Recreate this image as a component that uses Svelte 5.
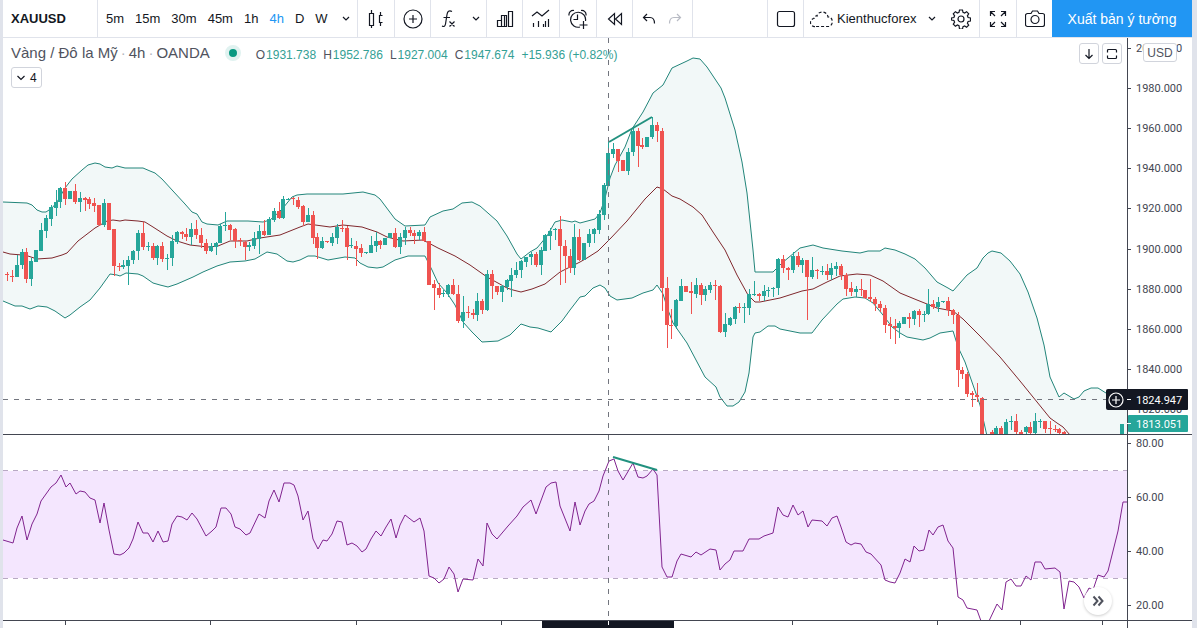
<script>
  const intervals = ['5m', '15m', '30m', '45m', '1h', '4h', 'D', 'W'];
  let active = '4h';

  const ohlc = [
    ['O', '1931.738'],
    ['H', '1952.786'],
    ['L', '1927.004'],
    ['C', '1947.674']
  ];

  // one candle per bar: direction, high, body top, body bottom, low
  const rawCandles = `
    r272,274,275,281 r270,276,277,282 g255,265,277,277 g249,252,265,269 r248,252,279,283 g258,261,279,286
    g250,250,262,262 g223,230,251,251 g215,218,231,238 g205,207,219,226 g190,202,208,216 g187,188,202,208
    r182,188,199,205 g191,191,199,199 r184,191,202,204 g192,198,202,212 r197,198,200,211 r197,199,204,209
    r198,203,206,212 r205,205,225,226 g199,203,225,227 r203,203,230,230 r229,229,266,276 r263,266,267,271
    g260,265,267,269 g256,260,266,285 g250,251,260,264 g230,233,251,260 r222,233,247,250 g242,246,247,251
    r243,246,258,260 g245,246,258,265 r242,246,259,262 g254,258,259,270 g235,241,258,266 g231,232,242,244
    r231,232,234,239 r228,234,237,241 g223,229,237,245 r220,229,235,239 r228,235,243,248 r239,243,251,254
    g243,246,251,252 g242,243,247,255 g224,226,243,243 g212,225,226,231 r224,225,230,240 r228,229,241,248
    r238,240,241,246 r241,242,247,260 g242,245,247,251 g232,238,246,249 g225,231,239,254 r220,231,235,236
    g217,219,235,235 g208,211,220,222 r202,211,218,219 g196,199,218,219 g198,199,200,200 r197,198,199,205
    r197,200,207,209 r205,206,222,226 g208,215,222,222 r211,215,238,244 r233,237,248,259 g237,241,248,249
    r241,241,242,243 g233,237,243,246 g224,227,238,244 r220,228,229,232 r226,228,247,260 g238,245,246,248
    r241,246,249,266 r244,248,253,257 g252,252,253,254 g236,245,253,253 g232,241,246,252 r240,241,245,249
    g238,238,245,245 g233,233,238,238 r228,233,247,248 g233,237,247,254 g227,230,238,245 r227,230,233,236
    r230,233,236,244 g230,232,236,240 r227,232,241,242 r241,241,285,285 r280,284,288,310 r283,288,295,298
    g290,293,294,297 g284,285,294,297 r279,285,294,295 r285,294,321,323 g296,312,321,328 r306,312,313,318
    r309,313,315,319 g293,301,315,321 r299,301,310,314 g270,274,310,311 r270,274,286,299 r286,286,292,295
    g285,286,292,302 g279,280,287,290 g268,275,281,297 g262,270,275,278 g260,261,270,278 g257,257,262,267
    g252,254,257,265 r252,254,265,267 g247,250,265,275 g234,235,251,251 g228,231,236,250 g228,229,230,240
    r216,229,246,285 r240,246,256,283 r249,256,268,273 g224,237,268,275 r229,237,260,261 g243,243,260,260
    g229,234,243,247 g228,229,234,243 g210,214,230,234 g183,185,215,220 g142,153,186,186 g143,149,154,158
    r149,149,161,172 r160,160,171,171 g148,152,171,175 g128,131,152,156 r128,131,146,167 r138,145,147,149
    g137,137,147,147 g117,125,137,139 r122,125,131,142 r128,131,288,311 r277,288,325,348 r309,325,326,339
    g299,300,326,329 g279,286,301,301 r286,286,292,292 r282,291,293,314 g278,285,294,298 r283,285,295,305
    g286,289,295,301 g282,285,290,293 r280,285,286,300 r285,286,332,333 g313,324,332,337 g317,318,325,326
    g306,307,319,324 r303,307,308,313 g303,307,308,323 g289,294,308,315 g281,294,295,296 r293,294,296,301
    g285,291,296,301 g287,290,291,297 g287,288,289,297 g258,259,288,295 r255,259,268,273 r267,268,270,280
    g252,256,270,273 r252,256,265,267 g258,260,265,273 r260,260,277,320 g257,270,277,279 r269,270,271,279
    g266,271,272,275 r264,271,275,280 g263,268,275,280 g262,266,269,276 r264,266,275,280 r273,275,289,296
    r282,288,292,296 g286,289,292,297 r279,289,290,296 r290,290,298,299 r279,297,299,302 r297,299,304,311
    r301,304,308,312 r305,308,325,333 r317,324,326,339 r319,326,328,344 g321,323,328,338 g317,317,324,324
    r313,317,319,328 g310,311,319,325 r309,311,315,327 g311,314,315,322 g289,304,314,315 r300,304,307,309
    g297,302,307,312 g301,301,302,303 r297,301,310,316 r309,310,315,324 r312,315,370,387 r367,370,374,379
    r372,374,394,397 r391,393,395,407 r383,395,397,402 r397,398,440,440 r436,436,440,440 r430,432,436,436
    g426,428,436,436 r426,428,436,436 g419,422,436,436 g416,421,422,430 r414,421,432,434 r430,432,436,436
    g426,427,432,434 r422,427,433,434 g413,421,433,434 g419,421,422,428 r421,421,429,433 r421,428,429,434
    r425,429,430,432 r428,429,433,434 r431,432,436,436`;

  const firstX = 7;
  const step = 4.85;

  function parseCandle(item, i) {
    const [high, top, bottom, low] = item.slice(1).split(',').map(Number);
    return { x: Math.round(firstX + i * step), up: item[0] === 'g', high, top, bottom, low };
  }

  const candles = rawCandles.trim().split(/\s+/).map(parseCandle);
  candles.push({ x: 1122, up: true, high: 424, top: 424, bottom: 436, low: 436 });

  const upper = '3,202 27,203 32,205 37,210 42,212 46,212 52,208 57,202 65,188 72,179 82,170 88,165 95,163 100,164 105,167 112,168 117,166 125,168 143,168 150,171 155,173 162,179 173,191 185,204 192,212 197,214 202,222 207,224 218,225 227,221 233,221 248,221 263,222 270,220 278,213 283,208 292,197 297,195 307,194 343,194 363,192 375,195 380,199 395,219 405,226 425,225 430,217 443,211 453,209 462,203 472,202 480,206 497,221 507,236 517,254 521,259 530,252 537,248 547,236 555,222 562,220 572,222 575,221 580,223 595,219 600,213 605,198 610,178 615,165 625,147 632,129 643,112 653,93 663,85 672,68 687,61 693,58 700,59 707,67 717,82 721,88 725,98 735,130 742,162 747,193 753,250 755,272 773,272 782,263 788,258 800,248 813,245 823,248 842,251 860,253 868,251 880,251 885,248 895,250 905,254 915,259 925,268 937,282 948,288 953,291 967,275 977,268 983,258 988,253 992,251 1001,253 1010,261 1020,274 1028,292 1037,318 1044,345 1050,377 1059,397 1064,393 1074,399 1079,397 1084,391 1091,388 1098,388 1106,393 1127,402';
  const lower = '3,301 15,306 22,306 30,309 38,306 47,307 55,311 65,318 70,315 80,307 90,300 100,288 110,274 117,275 120,276 126,273 138,274 143,276 153,283 160,285 168,287 177,284 193,277 203,272 217,266 230,262 245,261 255,259 267,252 277,254 287,261 293,262 300,260 308,256 315,256 328,260 345,257 355,258 360,263 368,267 377,268 383,267 395,260 408,256 425,256 432,270 438,283 447,293 455,305 463,322 472,332 482,342 498,341 510,335 521,324 530,327 538,328 551,332 562,321 570,310 580,297 585,296 593,288 600,285 605,288 610,296 617,300 632,298 643,293 653,290 657,285 663,294 668,310 673,323 687,343 705,377 716,387 720,397 727,406 733,406 739,402 745,392 749,373 753,337 755,333 760,332 768,326 775,326 780,329 800,333 812,333 822,320 837,304 843,299 855,297 865,298 873,303 883,315 892,327 900,333 907,337 923,340 930,338 940,333 953,331 958,347 965,362 973,385 980,405 987,436 1127,440';
  const middle = '3,252 10,254 22,255 28,256 37,259 52,258 62,255 67,253 78,241 95,228 107,221 113,220 120,221 125,220 138,221 145,222 153,227 167,236 177,241 190,245 208,247 218,246 230,241 247,241 260,238 280,235 300,227 308,224 330,227 343,225 362,227 377,232 387,237 403,241 423,240 438,248 455,256 470,265 487,277 507,288 513,290 521,292 532,289 545,284 560,272 580,262 587,258 598,251 610,239 627,221 645,199 657,187 663,189 672,196 680,199 693,207 702,215 713,232 725,250 737,275 748,295 755,302 760,302 780,298 802,291 813,289 827,282 840,276 857,274 870,275 883,281 900,293 917,300 937,308 953,311 963,319 980,336 1000,357 1020,381 1050,418 1057,423 1063,427 1070,435';
  const bandFill = upper + ' ' + lower.split(' ').reverse().join(' ');

  const rsi = '3,540 13,543 17,528 22,516 27,540 32,524 37,514 41,501 51,487 56,483 61,475 66,487 70,483 76,494 80,491 85,492 90,498 95,500 100,523 104,503 109,530 114,554 120,555 124,553 129,548 133,539 138,522 143,533 148,533 153,542 158,531 163,542 168,541 172,524 177,516 182,517 187,520 192,513 197,519 206,536 212,531 216,527 221,508 226,508 231,514 235,527 240,529 246,535 250,533 259,514 265,518 269,501 274,490 279,502 284,483 290,483 294,485 298,496 303,520 308,511 313,539 318,549 323,540 327,541 332,534 337,521 342,522 347,545 352,543 357,546 362,552 366,549 371,539 376,531 381,536 386,527 391,519 396,538 400,525 405,515 414,522 420,518 424,531 429,576 434,578 439,583 444,579 449,567 454,574 458,592 463,579 473,580 478,559 483,566 487,523 492,534 497,539 508,526 517,516 523,507 531,500 536,514 546,487 551,483 556,482 560,506 570,531 575,502 580,525 585,511 589,504 594,501 599,491 603,476 609,461 614,459 618,471 623,480 633,463 638,477 643,478 647,476 653,469 657,475 662,567 667,577 672,577 677,561 681,554 691,557 696,552 701,555 710,549 716,550 720,570 725,564 730,560 734,551 743,551 749,539 759,539 764,536 773,533 778,507 783,515 788,517 793,505 798,515 803,511 808,527 812,520 822,521 827,526 832,518 837,516 841,527 846,542 851,545 855,543 861,544 866,552 871,554 881,565 885,580 890,582 895,583 900,573 905,559 910,562 914,546 919,551 924,550 929,530 933,535 938,527 943,525 948,541 953,548 958,597 963,600 967,608 977,610 981,621 989,621 997,604 1002,610 1006,582 1011,579 1016,586 1021,586 1026,576 1031,580 1035,562 1041,562 1045,569 1055,568 1060,572 1064,609 1069,581 1074,582 1079,587 1084,598 1089,588 1093,590 1098,575 1104,577 1108,571 1118,531 1123,502 1127,502';

  const priceLabels = [2000, 1980, 1960, 1940, 1920, 1900, 1880, 1860, 1840, 1820].map((p, i) => ({
    text: p.toFixed(3),
    y: Math.round(48 + i * 40.1)
  }));
  const rsiLabels = [80, 60, 40, 20].map((v, i) => ({ text: v.toFixed(2), y: 443 + i * 54 }));
  const timeTicks = [65, 210, 356, 501, 792, 937, 1020, 1102];
</script>

<div class="page">
  <div class="edge left"></div>
  <main>
    <header>
      <button class="cell symbol">XAUUSD</button>
      <nav class="cell intervals">
        {#each intervals as name}
          <button class:active={name === active} on:click={() => (active = name)}>{name}</button>
        {/each}
        <button class="more" aria-label="More intervals">
          <svg width="8" height="6" viewBox="0 0 8 6"><path d="M1 1l3 3 3-3" /></svg>
        </button>
      </nav>
      <button class="cell icon" aria-label="Chart type">
        <svg width="20" height="20" viewBox="0 0 20 20"><path d="M3.500 4.500h4v12h-4zM5.500 1v3.500M5.500 16.500V19M16.500 6.500h-3v7h3M14.500 3v3.500M14.500 13.500V17" /></svg>
      </button>
      <button class="cell icon narrow" aria-label="Compare">
        <svg width="20" height="20" viewBox="0 0 20 20"><circle cx="10" cy="10" r="9" /><path d="M10 6v8M6 10h8" /></svg>
      </button>
      <div class="cell pair">
        <button aria-label="Indicators">
          <svg width="16" height="20" viewBox="0 0 16 20"><path d="M11 2.500c-3-1.500-4.500 0-5 3L4.500 15c-.5 2.500-1.500 3-3.500 2M2.500 8.500H9M8.500 12.500l5 5M13.500 12.500l-5 5" /></svg>
        </button>
        <button aria-label="Indicator templates">
          <svg width="8" height="6" viewBox="0 0 8 6"><path d="M1 1l3 3 3-3" /></svg>
        </button>
      </div>
      <button class="cell icon narrow" aria-label="Financials">
        <svg width="18" height="18" viewBox="0 0 18 18"><path d="M1.500 10.500h4v6h-4zM5.500 5.500h5v11h-5zM12.500 1.500h4v15h-4zM8.500 5.500v11" /></svg>
      </button>
      <button class="cell icon" aria-label="Forecast">
        <svg width="20" height="20" viewBox="0 0 20 20"><path d="M1 7l5-4 5 4 7-6M2.500 14v4M7.500 12v6M12.500 15v3M14.500 12v6M17.500 10v8" /></svg>
      </button>
      <button class="cell icon" aria-label="Alert">
        <svg width="20" height="20" viewBox="0 0 20 20"><path d="M12 18a7.500 7.500 0 1 1 5.500-6M9.500 5.500v5h-4M1 6.500c-.5-3 2-5.500 5-5M18 6.500c.5-3-2-5.500-5-5M15.500 12v8M11.500 16h8" /></svg>
      </button>
      <button class="cell icon narrow" aria-label="Replay">
        <svg width="16" height="14" viewBox="0 0 16 14"><path d="M7.500 1.500v11L1.500 7zM14.500 1.500v11L8.500 7z" /></svg>
      </button>
      <div class="cell history">
        <button aria-label="Undo">
          <svg width="14" height="12" viewBox="0 0 14 12"><path d="M5 1L1.500 4.500 5 8M2 4.500h6c3 0 4.500 2 4.500 6" /></svg>
        </button>
        <button class="off" aria-label="Redo">
          <svg width="14" height="12" viewBox="0 0 14 12"><path d="M9 1l3.500 3.500L9 8M12 4.500H6c-3 0-4.500 2-4.500 6" /></svg>
        </button>
      </div>
      <div class="cell spacer"></div>
      <button class="cell icon narrow" aria-label="Layout">
        <svg width="20" height="18" viewBox="0 0 20 18"><rect x="1.500" y="1.500" width="17" height="15" rx="2" /></svg>
      </button>
      <div class="cell account">
        <button class="name">
          <svg width="24" height="18" viewBox="0 0 24 18"><path stroke-dasharray="3 2" d="M5 16.500a4 4 0 0 1-1-8c0-2 2-3 3-2.500C8 .5 17 .5 18 7c5-.5 6 8 1 9.500z" /></svg>
          <span>Kienthucforex</span>
          <svg width="8" height="6" viewBox="0 0 8 6"><path d="M1 1l3 3 3-3" /></svg>
        </button>
        <button aria-label="Settings">
          <svg width="20" height="20" viewBox="0 0 20 20"><circle cx="10" cy="10" r="3" /><path d="M8.500 1h3l.5 2.300 1.600.7 2-1.300 2.100 2.100-1.300 2 .7 1.700 2.400.5v3l-2.400.5-.7 1.600 1.300 2-2.100 2.100-2-1.300-1.600.7-.5 2.400h-3L8 16.600l-1.600-.7-2 1.300-2.100-2.100 1.300-2-.7-1.600L.5 11V9l2.400-.5.7-1.700-1.300-2 2.100-2.100 2 1.300L8 3.300z" /></svg>
        </button>
      </div>
      <button class="cell icon" aria-label="Fullscreen">
        <svg width="18" height="18" viewBox="0 0 18 18"><path d="M1.500 6V1.500H6M12 1.500h4.500V6M16.500 12v4.500H12M6 16.500H1.500V12M1.500 1.500L6 6M16.500 1.500L12 6M16.500 16.500L12 12M1.500 16.500L6 12" /></svg>
      </button>
      <button class="cell icon last" aria-label="Snapshot">
        <svg width="20" height="18" viewBox="0 0 20 18"><path d="M6 3.500l1.500-2.500h5L14 3.500h3.500a2 2 0 0 1 2 2v9a2 2 0 0 1-2 2h-15a2 2 0 0 1-2-2v-9a2 2 0 0 1 2-2z" /><circle cx="10" cy="9.500" r="4" /></svg>
      </button>
      <button class="publish">Xuất bản ý tưởng</button>
    </header>

    <section class="chart">
      <div class="panes">
        <svg class="price" viewBox="3 38 1124 396" preserveAspectRatio="none">
          <polygon class="band" points={bandFill} />
          <polyline class="bound" points={upper} />
          <polyline class="bound" points={lower} />
          <polyline class="basis" points={middle} />
          {#each candles as c}
            <g class={c.up ? 'up' : 'down'}>
              <rect x={c.x} y={c.high} width="1" height={c.low - c.high} />
              <rect x={c.x - 2} y={c.top} width="4" height={c.bottom - c.top} />
            </g>
          {/each}
          <path class="trend" d="M609 142l43-25" />
          <path class="cross" d="M608.500 38v396M3 399.500h1103" />
        </svg>
        <svg class="rsi" viewBox="3 435 1124 185" preserveAspectRatio="none">
          <rect class="zone" x="3" y="471" width="1124" height="107" />
          <path class="level" d="M3 470.500h1124M3 578.500h1124" />
          <polyline class="rsi-line" points={rsi} />
          <path class="trend" d="M613 457l44 13" />
          <path class="cross" d="M608.500 435v185" />
        </svg>
        <svg class="time" viewBox="3 621 1124 7" preserveAspectRatio="none">
          {#each timeTicks as x}
            <rect x={x} y="621" width="1" height="4" />
          {/each}
          <rect class="stamp" x="542" y="621" width="132" height="7" />
          <rect class="stamp-tick" x="608" y="621" width="1" height="4" />
        </svg>

        <div class="legend">
          <div class="line">
            <h1>Vàng / Đô la Mỹ<i>·</i>4h<i>·</i>OANDA</h1>
            <span class="status"></span>
            <div class="values">
              {#each ohlc as [label, value]}
                <span>{label}<b>{value}</b></span>
              {/each}
              <b>+15.936 (+0.82%)</b>
            </div>
          </div>
          <button class="collapse">
            <svg width="10" height="8" viewBox="0 0 10 8"><path d="M1.500 2L5 5.500 8.500 2" /></svg>
            4
          </button>
        </div>

        <div class="pane-buttons">
          <button aria-label="Move pane down">
            <svg width="10" height="12" viewBox="0 0 10 12"><path d="M5 1v9.500M1.500 7L5 10.500 8.500 7" /></svg>
          </button>
          <button aria-label="Maximize pane">
            <svg width="12" height="12" viewBox="0 0 12 12"><path d="M1.500 4.500v-2a1 1 0 0 1 1-1h7a1 1 0 0 1 1 1v2M1.500 7.500v2a1 1 0 0 0 1 1h7a1 1 0 0 0 1-1v-2" /></svg>
          </button>
        </div>

        <button class="add" aria-label="Add at price">
          <svg width="16" height="16" viewBox="0 0 16 16"><circle cx="8" cy="8" r="7" /><path d="M8 4v8M4 8h8" /></svg>
        </button>
        <button class="jump" aria-label="Go to latest bar">
          <svg width="12" height="12" viewBox="0 0 12 12"><path d="M1.500 1.500L5.500 6l-4 4.500M6.500 1.500l4 4.500-4 4.500" /></svg>
        </button>
      </div>

      <div class="axis">
        <svg width="65" height="590" viewBox="1127 38 65 590">
          {#each [...priceLabels, ...rsiLabels] as l}
            <rect x="1128" y={l.y} width="3" height="1" />
            <text x="1136" y={l.y + 4}>{l.text}</text>
          {/each}
          <rect x="1127" y="38" width="1" height="590" />
          <rect x="1127" y="434" width="65" height="1" />
          <rect x="1127" y="620" width="65" height="1" />
          <rect class="tag-dark" x="1127" y="389" width="61" height="21" rx="1" />
          <rect class="tag-green" x="1128" y="415" width="60" height="17" rx="1" />
          <path class="tag-tick" d="M1127 399.500h4M1127 423.500h4" />
          <text class="tag" x="1136" y="404">1824.947</text>
          <text class="tag" x="1136" y="428">1813.051</text>
        </svg>
        <button class="currency">USD</button>
      </div>
    </section>
  </main>
  <div class="edge right"></div>
  <aside></aside>
</div>

<style>
  :global(body) {
    margin: 0;
    background: #fff;
  }

  .page {
    display: flex;
    min-height: 100vh;
    overflow: hidden;
    font-family: "Liberation Sans", Arial, sans-serif;
    font-size: 13px;
    color: #131722;
  }

  .edge {
    flex: none;
    background: #e0e3eb;
  }

  .edge.left {
    width: 3px;
  }

  .edge.right {
    width: 5px;
  }

  aside {
    width: 3px;
    flex: none;
  }

  main {
    flex: 1;
    min-width: 0;
  }

  button {
    display: flex;
    align-items: center;
    justify-content: center;
    padding: 0;
    border: 0;
    background: none;
    font: inherit;
    color: inherit;
    cursor: pointer;
  }

  button svg {
    display: block;
    fill: none;
    stroke: currentColor;
    stroke-width: 1.2;
  }

  /* toolbar */
  header {
    display: flex;
    height: 37px;
    border-bottom: 1px solid #e0e3eb;
  }

  .cell {
    flex: none;
    display: flex;
    align-items: center;
    box-sizing: border-box;
    border-right: 1px solid #e0e3eb;
  }

  .symbol {
    width: 95px;
    padding-left: 8px;
    justify-content: flex-start;
    font-weight: bold;
  }

  .intervals {
    width: 260px;
    padding-left: 8px;
    gap: 11px;
  }

  .more {
    margin-left: 3px;
  }

  .active {
    color: #2196f3;
  }

  .icon {
    width: 37px;
  }

  .icon.narrow {
    width: 36px;
  }

  .icon.last {
    width: 35px;
    border-right: 0;
  }

  .pair {
    width: 56px;
    padding-left: 10px;
    gap: 15px;
  }

  .history {
    width: 60px;
    padding-left: 9px;
    gap: 12px;
  }

  .off {
    color: #b8bbc4;
  }

  .spacer {
    flex: 1;
  }

  .account {
    width: 176px;
    padding: 0 8px 0 6px;
    justify-content: space-between;
  }

  .name {
    gap: 3px;
  }

  .name span {
    margin-right: 8px;
  }

  .publish {
    flex: none;
    width: 140px;
    background: #2196f3;
    color: #fff;
    font-size: 14px;
  }

  /* panes */
  .chart {
    display: flex;
  }

  .panes {
    position: relative;
    flex: 1;
    min-width: 0;
  }

  .panes > svg {
    display: block;
    box-sizing: content-box;
    width: 100%;
    fill: none;
  }

  .price {
    height: 396px;
  }

  .rsi {
    height: 185px;
    border-top: 1px solid #434651;
  }

  .time {
    height: 7px;
    border-top: 1px solid #434651;
  }

  .band {
    fill: #f2f8f8;
  }

  .bound {
    stroke: #22857a;
  }

  .basis {
    stroke: #80282d;
  }

  .up {
    fill: #26a69a;
  }

  .down {
    fill: #ef5350;
  }

  .trend {
    stroke: #22917f;
    stroke-width: 2;
  }

  .cross {
    stroke: #72757e;
    stroke-dasharray: 5 6;
  }

  .zone {
    fill: #f4e6fe;
  }

  .level {
    stroke: #b9a9c4;
    stroke-dasharray: 5 5;
  }

  .rsi-line {
    stroke: #81248f;
  }

  .time rect {
    fill: #434651;
  }

  .time .stamp {
    fill: #131722;
  }

  .time .stamp-tick {
    fill: #fff;
  }

  /* legend */
  .legend {
    position: absolute;
    top: 5px;
    left: 8px;
  }

  .line {
    display: flex;
    align-items: center;
    height: 20px;
  }

  h1 {
    margin: 0;
    padding-bottom: 2px;
    font-size: 15px;
    font-weight: normal;
    color: #50535e;
    white-space: nowrap;
  }

  h1 i {
    margin: 0 3px;
    font-style: normal;
    color: #b2b5be;
  }

  .status {
    width: 8px;
    height: 8px;
    margin: 0 15px;
    border: 4px solid #e0f2f0;
    border-radius: 50%;
    background: #089981;
  }

  .values {
    display: flex;
    gap: 7px;
    padding-top: 4px;
    font-size: 12px;
    color: #50535e;
    white-space: nowrap;
  }

  .values b {
    font-weight: normal;
    color: #34a095;
  }

  .values span b {
    margin-left: 1px;
  }

  .collapse {
    height: 21px;
    margin-top: 4px;
    padding: 0 4px;
    gap: 4px;
    border: 1px solid #d1d4dc;
    border-radius: 3px;
    background: #fff;
    font-size: 12px;
  }

  .pane-buttons {
    position: absolute;
    top: 5px;
    right: 5px;
    display: flex;
    gap: 3px;
  }

  .pane-buttons button {
    box-sizing: border-box;
    width: 20px;
    height: 21px;
    border: 1px solid #d1d4dc;
    border-radius: 3px;
    background: #fff;
  }

  .add {
    position: absolute;
    top: 351px;
    right: 0;
    box-sizing: border-box;
    width: 21px;
    height: 21px;
    padding-right: 2px;
    border-radius: 2px 0 0 2px;
    background: #131722;
    color: #fff;
  }

  .jump {
    position: absolute;
    right: 15px;
    bottom: 13px;
    width: 28px;
    height: 28px;
    border-radius: 50%;
    background: #fff;
    box-shadow: 0 1px 3px rgba(0, 0, 0, 0.2);
    color: #50535e;
  }

  .jump svg {
    stroke-width: 2;
  }

  /* price scale */
  .axis {
    position: relative;
    flex: none;
    width: 65px;
  }

  .axis svg {
    display: block;
    fill: #434651;
  }

  .axis text {
    font-family: Roboto, "Liberation Sans", sans-serif;
    font-size: 11px;
  }

  .axis .tag-dark {
    fill: #131722;
  }

  .axis .tag-green {
    fill: #26a69a;
  }

  .axis .tag-tick {
    stroke: #fff;
  }

  .axis .tag {
    fill: #fff;
  }

  .currency {
    position: absolute;
    top: 5px;
    left: 16px;
    box-sizing: border-box;
    width: 34px;
    height: 19px;
    border: 1px solid #d1d4dc;
    border-radius: 3px;
    background: #fff;
    font-size: 12px;
    color: #50535e;
  }
</style>
